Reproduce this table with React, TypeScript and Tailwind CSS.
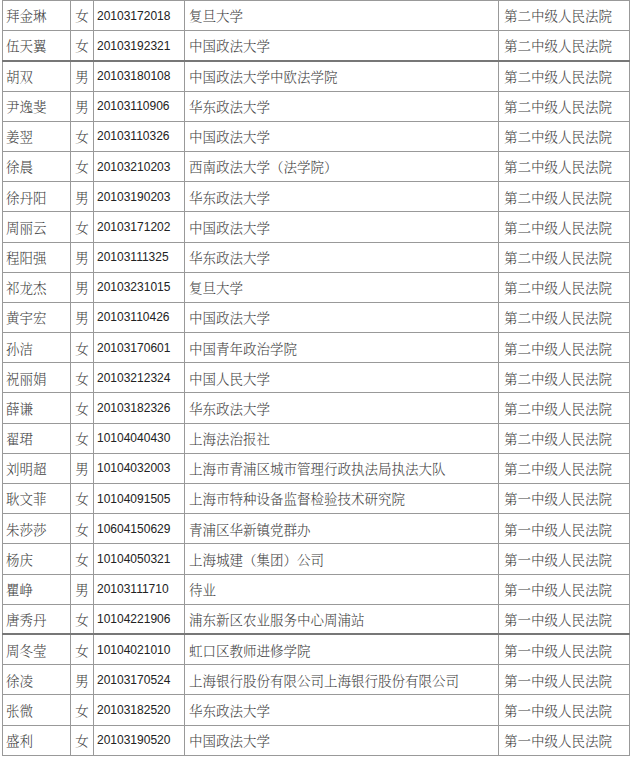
const rows: [string, string, string, string, string][] = [
  ["拜金琳", "女", "20103172018", "复旦大学", "第二中级人民法院"],
  ["伍天翼", "女", "20103192321", "中国政法大学", "第二中级人民法院"],
  ["胡双", "男", "20103180108", "中国政法大学中欧法学院", "第二中级人民法院"],
  ["尹逸斐", "男", "20103110906", "华东政法大学", "第二中级人民法院"],
  ["姜翌", "女", "20103110326", "中国政法大学", "第二中级人民法院"],
  ["徐晨", "女", "20103210203", "西南政法大学（法学院）", "第二中级人民法院"],
  ["徐丹阳", "男", "20103190203", "华东政法大学", "第二中级人民法院"],
  ["周丽云", "女", "20103171202", "中国政法大学", "第二中级人民法院"],
  ["程阳强", "男", "20103111325", "华东政法大学", "第二中级人民法院"],
  ["祁龙杰", "男", "20103231015", "复旦大学", "第二中级人民法院"],
  ["黄宇宏", "男", "20103110426", "中国政法大学", "第二中级人民法院"],
  ["孙洁", "女", "20103170601", "中国青年政治学院", "第二中级人民法院"],
  ["祝丽娟", "女", "20103212324", "中国人民大学", "第二中级人民法院"],
  ["薛谦", "女", "20103182326", "华东政法大学", "第二中级人民法院"],
  ["翟珺", "女", "10104040430", "上海法治报社", "第二中级人民法院"],
  ["刘明超", "男", "10104032003", "上海市青浦区城市管理行政执法局执法大队", "第二中级人民法院"],
  ["耿文菲", "女", "10104091505", "上海市特种设备监督检验技术研究院", "第一中级人民法院"],
  ["朱莎莎", "女", "10604150629", "青浦区华新镇党群办", "第一中级人民法院"],
  ["杨庆", "女", "10104050321", "上海城建（集团）公司", "第一中级人民法院"],
  ["瞿峥", "男", "20103111710", "待业", "第一中级人民法院"],
  ["唐秀丹", "女", "10104221906", "浦东新区农业服务中心周浦站", "第一中级人民法院"],
  ["周冬莹", "女", "10104021010", "虹口区教师进修学院", "第一中级人民法院"],
  ["徐凌", "男", "20103170524", "上海银行股份有限公司上海银行股份有限公司", "第一中级人民法院"],
  ["张微", "女", "20103182520", "华东政法大学", "第一中级人民法院"],
  ["盛利", "女", "20103190520", "中国政法大学", "第一中级人民法院"],
];

const cjk = "font-['Noto_Serif_CJK_SC','Noto_Sans_CJK_SC',serif]";

export default function App() {
  return (
    <div className="w-[630px] h-[758px] bg-white overflow-hidden">
      <table className="ml-[2px] w-[627px] border-collapse table-fixed text-[#444]">
        <colgroup>
          <col className="w-[68px]" />
          <col className="w-[23px]" />
          <col className="w-[91px]" />
          <col className="w-[314px]" />
          <col className="w-[131px]" />
        </colgroup>
        <tbody>
          {rows.map((r, i) => {
            const thick = i === 2 || i === 21;
            const top = thick ? "border-t-2 border-t-[#777]" : "";
            return (
              <tr key={i} className="h-[30.2px]">
                <td className={`border border-[#999] ${top} pl-[3px] text-[13.5px] font-light ${cjk} whitespace-nowrap`}>
                  {r[0]}
                </td>
                <td className={`border border-[#999] ${top} text-center text-[13.5px] font-light ${cjk}`}>
                  {r[1]}
                </td>
                <td className={`border border-[#999] ${top} pl-[3px] text-[12px] text-[#222] font-['Liberation_Sans',sans-serif]`}>
                  {r[2]}
                </td>
                <td className={`border border-[#999] ${top} pl-[4px] text-[13.5px] font-light ${cjk} whitespace-nowrap`}>
                  {r[3]}
                </td>
                <td className={`border border-[#999] ${top} pl-[5px] text-[13.5px] font-light ${cjk} whitespace-nowrap`}>
                  {r[4]}
                </td>
              </tr>
            );
          })}
        </tbody>
      </table>
    </div>
  );
}
